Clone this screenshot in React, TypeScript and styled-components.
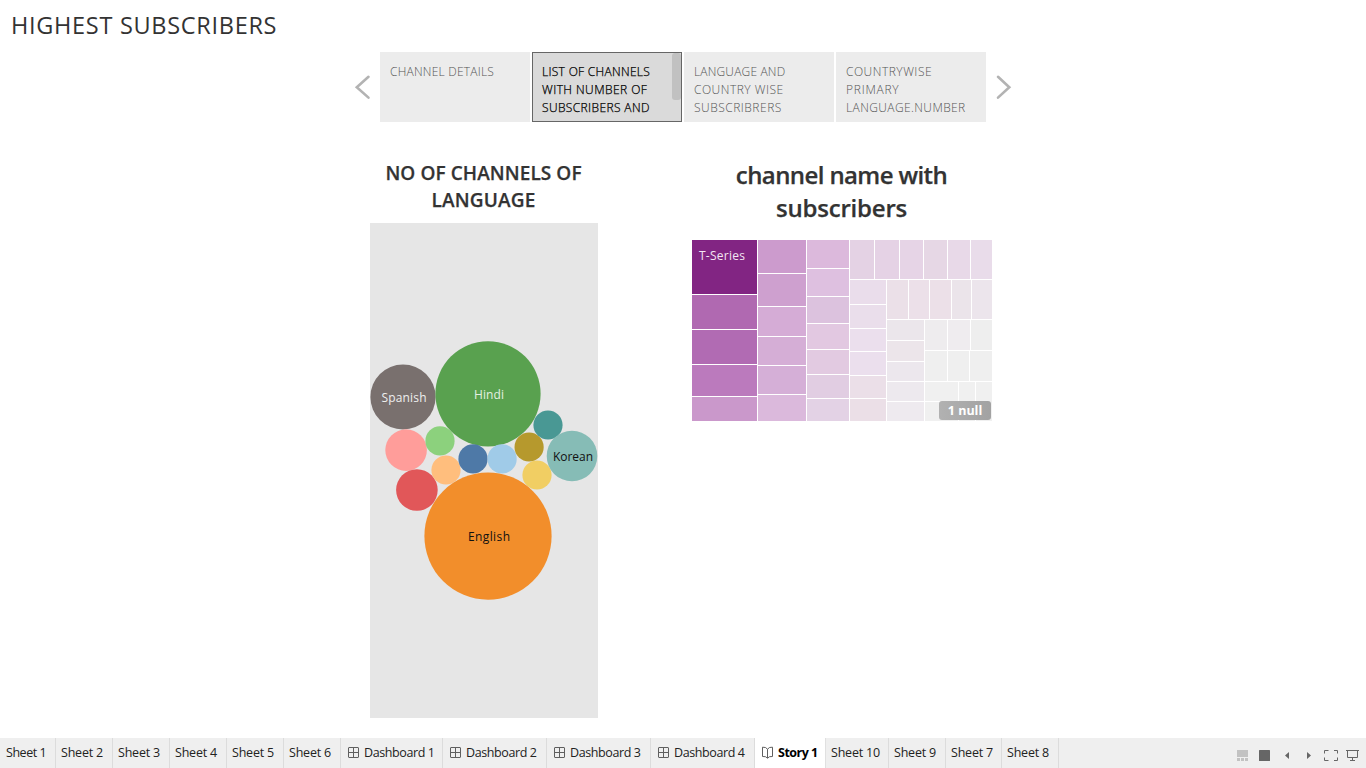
import React from "react";
import styled, { createGlobalStyle } from "styled-components";

const GlobalStyle = createGlobalStyle`
  * { box-sizing: border-box; }
  html, body { margin: 0; padding: 0; background: #fff; overflow: hidden; }
  body { font-family: "Open Sans", "Noto Sans", sans-serif; color: #333; }
`;

const Page = styled.div`
  display: flex;
  flex-direction: column;
  width: 1366px;
  height: 768px;
  background: #fff;
`;

const Title = styled.h1`
  margin: 0;
  height: 52px;
  padding: 8px 0 0 11px;
  font-size: 23.5px;
  line-height: 34px;
  font-weight: 400;
  letter-spacing: 0.7px;
  white-space: nowrap;
`;

const Navigator = styled.nav`
  display: flex;
  align-items: center;
  height: 70px;
  padding-left: 352px;
`;

const ArrowButton = styled.button`
  display: flex;
  align-items: center;
  justify-content: center;
  width: 20px;
  height: 70px;
  padding: 0 0 1px;
  border: 0;
  background: none;
`;

const Points = styled.div`
  display: flex;
  gap: 2px;
  margin: 0 9px 0 8px;
`;

const Point = styled.div<{ $active?: boolean }>`
  position: relative;
  width: 150px;
  height: 70px;
  padding: 11px 10px 0;
  overflow: hidden;
  background: ${(p) => (p.$active ? "#dadada" : "#ececec")};
  box-shadow: ${(p) => (p.$active ? "inset 0 0 0 1px #666" : "none")};
  color: ${(p) => (p.$active ? "#000" : "#555")};
  font-size: 12px;
  line-height: 18px;
  font-weight: 300;
  -webkit-text-stroke: ${(p) => (p.$active ? "0.25px #000" : "0")};
`;

const Line = styled.span<{ $spacing?: number }>`
  display: block;
  white-space: nowrap;
  letter-spacing: ${(p) => p.$spacing ?? 0}px;
`;

const ScrollThumb = styled.i`
  position: absolute;
  top: 1px;
  right: 1px;
  width: 9px;
  height: 47px;
  border-radius: 3px;
  background: #c1c1c1;
`;

const Content = styled.main`
  display: flex;
  align-items: flex-start;
  flex: 1;
  min-height: 0;
  padding-left: 370px;
`;

const LanguagePanel = styled.section`
  width: 228px;
  padding-top: 38px;
`;

const ChannelPanel = styled.section`
  width: 300px;
  margin-left: 94px;
  padding-top: 36px;
`;

const Heading = styled.h2<{ $size: number; $line: number; $height: number }>`
  display: flex;
  flex-direction: column;
  align-items: center;
  margin: 0;
  padding-right: 1px;
  height: ${(p) => p.$height}px;
  font-size: ${(p) => p.$size}px;
  line-height: ${(p) => p.$line}px;
  font-weight: 600;
  color: #333;
  -webkit-text-stroke: 0.25px #333;
`;

const BubbleChart = styled.svg`
  display: block;
  background: #e6e6e6;
  font-size: 12px;
`;

const TreeWrap = styled.div`
  position: relative;
  width: 300px;
  height: 181px;
`;

const Split = styled.div<{ $dir: "row" | "column"; $size?: number }>`
  display: flex;
  flex-direction: ${(p) => p.$dir};
  flex: ${(p) => (p.$size ? `0 0 ${p.$size}px` : "1 1 0")};
  gap: 1px;
  min-width: 0;
  min-height: 0;
`;

const TreeRoot = styled(Split)`
  width: 300px;
  height: 181px;
`;

const Cell = styled.div<{ $size: number; $fill: string }>`
  flex: 0 0 ${(p) => p.$size}px;
  padding: 7px 0 0 7px;
  overflow: hidden;
  background: ${(p) => p.$fill};
  color: #f3e6f3;
  font-size: 12px;
  line-height: 18px;
  letter-spacing: 0.25px;
`;

const NullBadge = styled.div`
  position: absolute;
  right: 1px;
  bottom: 1px;
  width: 52px;
  height: 19px;
  border-radius: 3px;
  background: linear-gradient(to right, rgba(174, 174, 174, 0.95), rgba(158, 158, 158, 0.95));
  color: #fff;
  text-align: center;
  font-size: 12.5px;
  line-height: 19px;
  font-weight: 700;
`;

const TabBar = styled.footer`
  display: flex;
  height: 30px;
  background: #efefef;
`;

const Tab = styled.div<{ $width: number; $active?: boolean; $wide?: boolean }>`
  display: flex;
  align-items: center;
  flex: 0 0 ${(p) => p.$width}px;
  height: 30px;
  padding: 0 0 1px 5px;
  border-right: 1px solid ${(p) => (p.$active ? "#e0e0e0" : "#dcdcdc")};
  background: ${(p) => (p.$active ? "#fff" : "transparent")};
  color: ${(p) => (p.$active ? "#000" : "#222")};
  font-size: 12.5px;
  font-weight: ${(p) => (p.$active ? 700 : 400)};
  letter-spacing: ${(p) => (p.$active ? -0.5 : p.$wide ? -0.4 : -0.2)}px;
  white-space: nowrap;

  &:first-child { padding-left: 6px; letter-spacing: -0.45px; }

  svg { flex: none; margin: 0 5px 0 2px; }
`;

const Tools = styled.div`
  display: flex;
  align-items: center;
  margin-left: auto;
  padding: 5px 7px 0 0;
`;

type Bubble = { x: number; y: number; r: number; fill: string; label?: string; ink?: string; w?: number };

const bubbles: Bubble[] = [
  { x: 403, y: 397, r: 32.6, fill: "#79706e", label: "Spanish", ink: "#eee", w: 45 },
  { x: 488, y: 393.8, r: 52.6, fill: "#59a14f", label: "Hindi", ink: "#e4f0e2", w: 30 },
  { x: 406.1, y: 450.1, r: 20.8, fill: "#ff9d9a" },
  { x: 416.9, y: 490, r: 20.8, fill: "#e15759" },
  { x: 440, y: 440.9, r: 14.6, fill: "#8cd17d" },
  { x: 446, y: 470, r: 14.6, fill: "#ffbe7d" },
  { x: 473, y: 458.9, r: 14.6, fill: "#4e79a7" },
  { x: 502.1, y: 458.9, r: 14.6, fill: "#a0cbe8" },
  { x: 529.1, y: 447, r: 14.6, fill: "#b6992d" },
  { x: 537, y: 475, r: 14.6, fill: "#f1ce63" },
  { x: 548, y: 425, r: 14.6, fill: "#499894" },
  { x: 572, y: 456, r: 25.3, fill: "#86bcb6", label: "Korean", ink: "#111", w: 40 },
  { x: 488, y: 536.1, r: 63.6, fill: "#f28e2b", label: "English", ink: "#111", w: 42 },
];

type CellSpec = [number, string];

const Cells = ({ items }: { items: CellSpec[] }) => (
  <>
    {items.map(([size, fill], i) => (
      <Cell key={i} $size={size} $fill={fill} />
    ))}
  </>
);

const Treemap = () => (
  <TreeRoot $dir="row">
    <Split $dir="column" $size={65}>
      <Cell $size={54} $fill="#822583">T-Series</Cell>
      <Cells items={[[34, "#b069b1"], [34, "#b16bb3"], [31, "#bb7abd"], [24, "#ca98cb"]]} />
    </Split>
    <Split $dir="column" $size={48}>
      <Cells items={[[33, "#cc9bcd"], [32, "#cea0cf"], [29, "#d5acd6"], [28, "#d5aed6"], [28, "#d5afd7"], [26, "#dbb9dc"]]} />
    </Split>
    <Split $dir="column" $size={42}>
      <Cells items={[[28, "#dcb9dc"], [27, "#dec0e0"], [26, "#dcc2de"], [25, "#e2c8e1"], [24, "#e2cae1"], [23, "#e1cde2"], [22, "#e3d2e5"]]} />
    </Split>
    <Split $dir="column" $size={142}>
      <Split $dir="row" $size={39}>
        <Cells items={[[24, "#e4d2e4"], [24, "#e5d2e5"], [23, "#e6d4e6"], [23, "#e6d7e5"], [22, "#e8d9e8"], [21, "#e9dcea"]]} />
      </Split>
      <Split $dir="row">
        <Split $dir="column" $size={36}>
          <Cells items={[[24, "#eaddeb"], [23, "#eadeeb"], [22, "#ebdfed"], [23, "#ebdfed"], [22, "#ebdfe8"], [22, "#ebdfe7"]]} />
        </Split>
        <Split $dir="column" $size={105}>
          <Split $dir="row" $size={39}>
            <Cells items={[[21, "#ebe0e8"], [20, "#ece0e9"], [21, "#ece0e8"], [19, "#ebe4ea"], [20, "#ece5ec"]]} />
          </Split>
          <Split $dir="row">
            <Split $dir="column" $size={37}>
              <Cells items={[[20, "#ebe6eb"], [20, "#ece5ea"], [19, "#ece7ed"], [19, "#ede9ee"], [19, "#eeeaef"]]} />
            </Split>
            <Split $dir="column" $size={67}>
              <Split $dir="row" $size={30}>
                <Cells items={[[22, "#eeecee"], [22, "#efecef"], [21, "#eeeeee"]]} />
              </Split>
              <Split $dir="row" $size={30}>
                <Cells items={[[22, "#efefef"], [21, "#efefef"], [22, "#efefef"]]} />
              </Split>
              <Split $dir="row">
                <Split $dir="column" $size={33}>
                  <Cells items={[[19, "#f0f0f0"], [19, "#f0f0f0"]]} />
                </Split>
                <Cells items={[[16, "#f0f0f0"], [16, "#f0f0f0"]]} />
              </Split>
            </Split>
          </Split>
        </Split>
      </Split>
    </Split>
  </TreeRoot>
);

const Arrow = ({ right }: { right?: boolean }) => (
  <ArrowButton aria-label={right ? "Next" : "Previous"}>
    <svg width="20" height="30" viewBox="0 0 20 30" fill="none" stroke="#b3b3b3" strokeWidth="2.6" strokeLinecap="round">
      <path d={right ? "M3 4.8 L14.3 15.2 L3 25.6" : "M16.5 4.8 L4.8 15.2 L16.5 25.6"} />
    </svg>
  </ArrowButton>
);

const GridIcon = () => (
  <svg width="11" height="11" viewBox="0 0 11 11" fill="none" stroke="#5f5f5f">
    <rect x=".5" y=".5" width="10" height="10" rx=".5" />
    <path d="M5.5 1V10M1 5.5H10" />
  </svg>
);

const BookIcon = () => (
  <svg width="11" height="13" viewBox="0 0 11 13" fill="none" stroke="#5f5f5f">
    <path d="M.5 1.2L3.5 1.5 5.5 3.2 7.5 1.5 10.5 1.2V10.5L7.5 10.7 5.5 12.2 3.5 10.7.5 10.5ZM5.5 3.2V12" />
  </svg>
);

const tabs: { name: string; width: number; kind?: "grid" | "book" }[] = [
  { name: "Sheet 1", width: 56 },
  { name: "Sheet 2", width: 57 },
  { name: "Sheet 3", width: 57 },
  { name: "Sheet 4", width: 57 },
  { name: "Sheet 5", width: 57 },
  { name: "Sheet 6", width: 57 },
  { name: "Dashboard 1", width: 102, kind: "grid" },
  { name: "Dashboard 2", width: 104, kind: "grid" },
  { name: "Dashboard 3", width: 104, kind: "grid" },
  { name: "Dashboard 4", width: 104, kind: "grid" },
  { name: "Story 1", width: 71, kind: "book" },
  { name: "Sheet 10", width: 63 },
  { name: "Sheet 9", width: 57 },
  { name: "Sheet 7", width: 56 },
  { name: "Sheet 8", width: 57 },
];

export default function App() {
  return (
    <Page>
      <GlobalStyle />
      <Title>HIGHEST SUBSCRIBERS</Title>
      <Navigator>
        <Arrow />
        <Points>
          <Point>
            <Line $spacing={0.22}>CHANNEL DETAILS</Line>
          </Point>
          <Point $active>
            <Line $spacing={0.3}>LIST OF CHANNELS</Line>
            <Line $spacing={0.45}>WITH NUMBER OF</Line>
            <Line $spacing={0.38}>SUBSCRIBERS AND</Line>
            <ScrollThumb />
          </Point>
          <Point>
            <Line $spacing={0.17}>LANGUAGE AND</Line>
            <Line $spacing={0.5}>COUNTRY WISE</Line>
            <Line $spacing={0.5}>SUBSCRIBRERS</Line>
          </Point>
          <Point>
            <Line $spacing={0.5}>COUNTRYWISE</Line>
            <Line $spacing={0.75}>PRIMARY</Line>
            <Line $spacing={0.4}>LANGUAGE.NUMBER</Line>
          </Point>
        </Points>
        <Arrow right />
      </Navigator>
      <Content>
        <LanguagePanel>
          <Heading $size={19} $line={27} $height={63}>
            <Line $spacing={0.08}>NO OF CHANNELS OF</Line>
            <Line $spacing={0.15}>LANGUAGE</Line>
          </Heading>
          <BubbleChart width="228" height="495" viewBox="370 223 228 495">
            {bubbles.map((b, i) => (
              <circle key={i} cx={b.x} cy={b.y} r={b.r} fill={b.fill} />
            ))}
            {bubbles.filter((b) => b.label).map((b) => (
              <text key={b.label} x={b.x + 1} y={b.y + 5} textAnchor="middle" textLength={b.w} fill={b.ink}>
                {b.label}
              </text>
            ))}
          </BubbleChart>
        </LanguagePanel>
        <ChannelPanel>
          <Heading $size={24} $line={33} $height={82}>
            <Line $spacing={-0.6}>channel name with</Line>
            <Line $spacing={-0.2}>subscribers</Line>
          </Heading>
          <TreeWrap>
            <Treemap />
            <NullBadge>1 null</NullBadge>
          </TreeWrap>
        </ChannelPanel>
      </Content>
      <TabBar>
        {tabs.map((t) => (
          <Tab key={t.name} $width={t.width} $active={t.kind === "book"} $wide={t.kind === "grid"}>
            {t.kind === "grid" && <GridIcon />}
            {t.kind === "book" && <BookIcon />}
            {t.name}
          </Tab>
        ))}
        <Tools>
          <svg width="122" height="12" viewBox="0 0 122 12" fill="#666">
            <path fill="#c2c2c2" d="M0 0H11V7H0ZM0 8H3V11H0ZM4 8H7V11H4ZM8 8H11V11H8Z" />
            <rect x="22" y="0" width="11" height="11" rx=".5" />
            <path d="M52 2V9L48 5.5ZM70 2V9L74 5.5Z" />
            <g fill="none" stroke="#666">
              <path d="M91.500 .5H87.500V3.500M97 .5H100.500V3.500M87.500 7.500V10.500H91.500M100.500 7.500V10.500H97" />
              <path d="M109 .5H122M110.500 1V7.500H120.500V1M115.500 7.500V11M113 10.500H118" />
            </g>
          </svg>
        </Tools>
      </TabBar>
    </Page>
  );
}
